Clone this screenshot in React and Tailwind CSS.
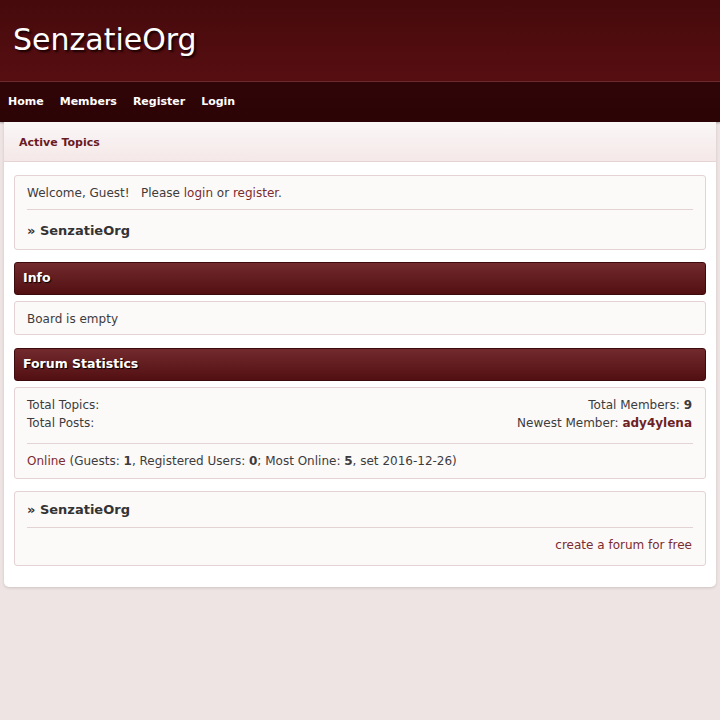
import React from 'react';

// simple forum index, dark red theme
const font = { fontFamily: '"DejaVu Sans", Verdana, sans-serif' };

function CatHeader({ children }) {
    return (
        <div className="h-[33px] flex items-center px-[8px] rounded-[3px] border border-[#3d0a0d] bg-gradient-to-b from-[#722a2d] to-[#520f12] text-white font-bold text-[12.5px] [text-shadow:1px_1px_1px_#000]">
            {children}
        </div>
    );
}

function Panel({ children, className = '' }) {
    return (
        <div className={`border border-[#e3d3d4] bg-[#fcf9f9] rounded-[3px] px-[12px] ${className}`}>
            {children}
        </div>
    );
}

export default function App() {
    return (
        <div className="min-h-[720px] bg-[#efe4e4] text-[#3c3c3c] text-[12px]" style={font}>
            {/* --- HEADER --- */}
            <header className="h-[81px] bg-gradient-to-b from-[#460a0c] to-[#570e11] flex items-center px-[13px] pb-[2px]">
                <h1 className="text-white text-[30px] leading-none [text-shadow:2px_2px_2px_#1a0203]">SenzatieOrg</h1>
            </header>
            <nav className="h-[41px] border-t border-[#6b2a2d] bg-gradient-to-b from-[#300507] to-[#2c0406] flex items-center px-[8px] pt-[1px] gap-[16px] text-white font-bold text-[11px] shadow-[0_1px_2px_rgba(0,0,0,0.3)]">
                <span>Home</span>
                <span>Members</span>
                <span>Register</span>
                <span>Login</span>
            </nav>

            {/* --- MAIN --- */}
            <div className="mx-[4px] bg-white rounded-b-[5px] shadow-[0_1px_3px_rgba(0,0,0,0.15)] pb-[21px]">
                <div className="h-[40px] flex items-center px-[15px] pt-[3px] border-b border-[#e6d4d5] bg-gradient-to-b from-[#faf7f7] to-[#f5e8e8] text-[#6b1a1f] font-bold text-[11px]">
                    Active Topics
                </div>

                <div className="px-[10px] pt-[13px] flex flex-col">
                    <Panel>
                        <div className="h-[34px] flex items-center border-b border-[#e3d3d4]">
                            <span>Welcome, Guest!&nbsp;&nbsp; Please <span className="text-[#7a2c32]">login</span> or <span className="text-[#7a2c32]">register</span>.</span>
                        </div>
                        <div className="h-[39px] flex items-center pt-[2px] font-bold text-[13px] text-[#333]">» SenzatieOrg</div>
                    </Panel>

                    <div className="mt-[12px]">
                        <CatHeader>Info</CatHeader>
                    </div>
                    <Panel className="mt-[6px] h-[34px] flex items-center pt-[1px]">Board is empty</Panel>

                    <div className="mt-[13px]">
                        <CatHeader>Forum Statistics</CatHeader>
                    </div>
                    <Panel className="mt-[6px]">
                        <div className="flex justify-between pt-[8px] pb-[11px] border-b border-[#e3d3d4] leading-[18px]">
                            <div>
                                <div>Total Topics:</div>
                                <div>Total Posts:</div>
                            </div>
                            <div className="text-right pr-[1px]">
                                <div>Total Members: <b>9</b></div>
                                <div>Newest Member: <b className="text-[#6e1f25]">ady4ylena</b></div>
                            </div>
                        </div>
                        <div className="h-[34px] flex items-center">
                            <span><span className="text-[#7a2c32]">Online</span> (Guests: <b>1</b>, Registered Users: <b>0</b>; Most Online: <b>5</b>, set 2016-12-26)</span>
                        </div>
                    </Panel>

                    <Panel className="mt-[12px]">
                        <div className="h-[36px] flex items-center pt-[1px] border-b border-[#e3d3d4] font-bold text-[13px] text-[#333]">» SenzatieOrg</div>
                        <div className="h-[37px] flex items-center justify-end pr-[1px] pb-[4px] text-[#7a2c32]">create a forum for free</div>
                    </Panel>
                </div>
            </div>
        </div>
    );
}
